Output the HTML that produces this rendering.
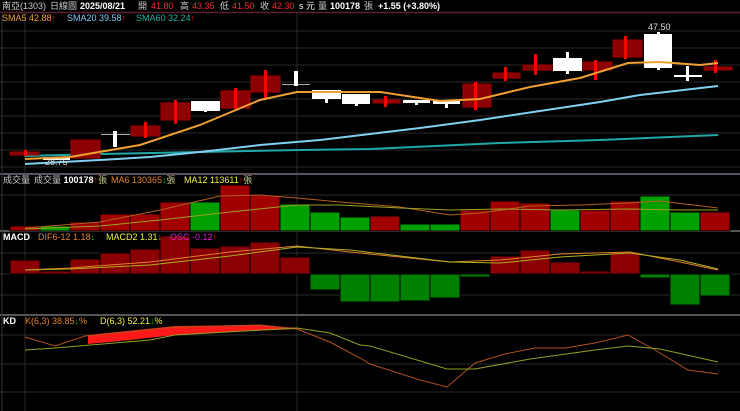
<!DOCTYPE html>
<html><head><meta charset="utf-8"><style>
html,body{margin:0;padding:0;background:#000;}
svg{display:block}
text{font-family:"Liberation Sans","Noto Sans CJK TC",sans-serif;font-size:9px}
</style></head><body>
<svg width="740" height="411" viewBox="0 0 740 411" xmlns="http://www.w3.org/2000/svg">
<rect width="740" height="411" fill="#000"/>
<g stroke="#2a2a2a" stroke-width="1">
<line x1="0" y1="31" x2="740" y2="31"/><line x1="0" y1="48" x2="740" y2="48"/><line x1="0" y1="65" x2="740" y2="65"/><line x1="0" y1="82" x2="740" y2="82"/><line x1="0" y1="99" x2="740" y2="99"/><line x1="0" y1="116" x2="740" y2="116"/><line x1="0" y1="133" x2="740" y2="133"/><line x1="0" y1="150" x2="740" y2="150"/><line x1="0" y1="167" x2="740" y2="167"/>
<line x1="0" y1="195" x2="740" y2="195"/>
<line x1="0" y1="253" x2="740" y2="253"/><line x1="0" y1="274" x2="740" y2="274"/><line x1="0" y1="295" x2="740" y2="295"/>
<line x1="0" y1="335" x2="740" y2="335"/><line x1="0" y1="364" x2="740" y2="364"/><line x1="0" y1="392" x2="740" y2="392"/>
<line x1="25" y1="13" x2="25" y2="411"/><line x1="297" y1="13" x2="297" y2="411"/>
</g>
<line x1="0" y1="12.5" x2="740" y2="12.5" stroke="#5a2030" stroke-width="1.5"/>
<line x1="0" y1="174" x2="740" y2="174" stroke="#5a5060" stroke-width="2"/>
<line x1="0" y1="231" x2="740" y2="231" stroke="#555" stroke-width="2"/>
<line x1="0" y1="315" x2="740" y2="315" stroke="#555" stroke-width="2"/>
<line x1="2" y1="13" x2="2" y2="411" stroke="#333"/>

<polyline fill="none" stroke="#20a8a8" stroke-width="2" points="25,156 100,154 200,152 300,150 370,149 500,143 600,140 718,135"/>
<polyline fill="none" stroke="#80d0f0" stroke-width="2" points="25,164 100,160 150,157 200,152 260,145 320,140 370,134 420,128 480,120 560,108 600,102 640,95 718,86"/>

<g fill="#8b0000" stroke="#a00000">
<rect x="10" y="152" width="29" height="3"/>
<rect x="71" y="140" width="29" height="18"/>
<rect x="131" y="126" width="29" height="10"/>
<rect x="161" y="103" width="29" height="17"/>
<rect x="221" y="91" width="29" height="17"/>
<rect x="251" y="76" width="29" height="16"/>
<rect x="373" y="100" width="27" height="3"/>
<rect x="463" y="84" width="28" height="23"/>
<rect x="493" y="73" width="27" height="5"/>
<rect x="523" y="65" width="29" height="5"/>
<rect x="583" y="62" width="29" height="8"/>
<rect x="613" y="40" width="29" height="17"/>
<rect x="704" y="67" width="28" height="3"/>
</g>
<g fill="#f00">
<rect x="24" y="150" width="3" height="6"/>
<rect x="144" y="122" width="3" height="16"/>
<rect x="174" y="100" width="3" height="24"/>
<rect x="234" y="88" width="3" height="21"/>
<rect x="264" y="70" width="3" height="30"/>
<rect x="384" y="96" width="3" height="11"/>
<rect x="474" y="82" width="3" height="28"/>
<rect x="504" y="67" width="3" height="14"/>
<rect x="534" y="54" width="3" height="21"/>
<rect x="594" y="60" width="3" height="20"/>
<rect x="624" y="36" width="3" height="23"/>
<rect x="714" y="60" width="3" height="13"/>
</g>
<g fill="#fff">
<rect x="43" y="157" width="27" height="3"/>
<rect x="101" y="134" width="29" height="1" fill="#aaa"/><rect x="113" y="131" width="4" height="16"/>
<rect x="191" y="101" width="29" height="10"/><rect x="204" y="101" width="3" height="11"/>
<rect x="282" y="84" width="28" height="1" fill="#aaa"/><rect x="294" y="71" width="4" height="15"/>
<rect x="312" y="90" width="29" height="9"/><rect x="325" y="90" width="3" height="13"/>
<rect x="342" y="94" width="28" height="10"/><rect x="355" y="94" width="3" height="12"/>
<rect x="403" y="100" width="27" height="3"/><rect x="415" y="100" width="3" height="5"/>
<rect x="433" y="101" width="27" height="3"/><rect x="445" y="101" width="3" height="7"/>
<rect x="553" y="58" width="29" height="13"/><rect x="566" y="52" width="3" height="22"/>
<rect x="644" y="34" width="28" height="34"/><rect x="657" y="32" width="3" height="38"/>
<rect x="674" y="75" width="28" height="2"/><rect x="686" y="66" width="3" height="15"/>
</g>
<polyline fill="none" stroke="#f0a030" stroke-width="2" points="25,159 70,157 140,145 200,125 260,100 297,92 340,92 380,92 440,101 480,99 530,87 580,78 628,63 660,62 700,65 718,63"/>
<text x="648" y="30" fill="#ddd" font-size="8">47.50</text>
<text x="45" y="165" fill="#ddd" font-size="8">28.75</text>

<!-- volume -->
<g stroke="#000" stroke-width="1">
<rect x="10" y="226" width="30" height="5" fill="#a00000"/>
<rect x="40" y="226" width="30" height="5" fill="#00a000"/>
<rect x="70" y="222" width="30" height="9" fill="#a00000"/>
<rect x="100" y="214" width="30" height="17" fill="#a00000"/>
<rect x="130" y="214" width="30" height="17" fill="#a00000"/>
<rect x="160" y="202" width="30" height="29" fill="#a00000"/>
<rect x="190" y="202" width="30" height="29" fill="#00a000"/>
<rect x="220" y="185" width="30" height="46" fill="#a00000"/>
<rect x="250" y="195" width="30" height="36" fill="#a00000"/>
<rect x="280" y="204" width="30" height="27" fill="#00a000"/>
<rect x="310" y="212" width="30" height="19" fill="#00a000"/>
<rect x="340" y="217" width="30" height="14" fill="#00a000"/>
<rect x="370" y="216" width="30" height="15" fill="#a00000"/>
<rect x="400" y="224" width="30" height="7" fill="#00a000"/>
<rect x="430" y="224" width="30" height="7" fill="#00a000"/>
<rect x="460" y="210" width="30" height="21" fill="#a00000"/>
<rect x="490" y="201" width="30" height="30" fill="#a00000"/>
<rect x="520" y="203" width="30" height="28" fill="#a00000"/>
<rect x="550" y="210" width="30" height="21" fill="#00a000"/>
<rect x="580" y="210" width="30" height="21" fill="#a00000"/>
<rect x="610" y="201" width="30" height="30" fill="#a00000"/>
<rect x="640" y="196" width="30" height="35" fill="#00a000"/>
<rect x="670" y="212" width="30" height="19" fill="#00a000"/>
<rect x="700" y="212" width="30" height="19" fill="#a00000"/>
</g>
<polyline fill="none" stroke="#b06020" stroke-width="1" points="25,228 100,222 160,210 220,196 260,195 297,198 340,202 400,207 450,215 480,213 530,206 580,205 628,203 660,201 718,208"/>
<polyline fill="none" stroke="#a0a020" stroke-width="1" points="25,229 100,226 160,220 230,212 297,205 340,205 400,208 450,210 500,209 560,210 628,209 680,210 718,210"/>

<!-- MACD -->
<g stroke="#000" stroke-width="1">
<rect x="10" y="260" width="30" height="14" fill="#8b0000"/>
<rect x="40" y="271" width="30" height="3" fill="#8b0000"/>
<rect x="70" y="259" width="30" height="15" fill="#8b0000"/>
<rect x="100" y="253" width="30" height="21" fill="#8b0000"/>
<rect x="130" y="249" width="30" height="25" fill="#8b0000"/>
<rect x="160" y="236" width="30" height="38" fill="#8b0000"/>
<rect x="190" y="248" width="30" height="26" fill="#8b0000"/>
<rect x="220" y="246" width="30" height="28" fill="#8b0000"/>
<rect x="250" y="242" width="30" height="32" fill="#8b0000"/>
<rect x="280" y="257" width="30" height="17" fill="#8b0000"/>
<rect x="310" y="274" width="30" height="16" fill="#008000"/>
<rect x="340" y="274" width="30" height="28" fill="#008000"/>
<rect x="370" y="274" width="30" height="28" fill="#008000"/>
<rect x="400" y="274" width="30" height="27" fill="#008000"/>
<rect x="430" y="274" width="30" height="24" fill="#008000"/>
<rect x="460" y="274" width="30" height="3" fill="#008000"/>
<rect x="490" y="256" width="30" height="18" fill="#8b0000"/>
<rect x="520" y="250" width="30" height="24" fill="#8b0000"/>
<rect x="550" y="262" width="30" height="12" fill="#8b0000"/>
<rect x="580" y="271" width="30" height="3" fill="#8b0000"/>
<rect x="610" y="252" width="30" height="22" fill="#8b0000"/>
<rect x="640" y="274" width="30" height="4" fill="#008000"/>
<rect x="670" y="274" width="30" height="31" fill="#008000"/>
<rect x="700" y="274" width="30" height="22" fill="#008000"/>
</g>
<polyline fill="none" stroke="#e08030" stroke-width="1" points="25,270 70,268 150,262 230,252 297,246 350,252 450,262 500,260 560,254 630,252 680,262 718,270"/>
<polyline fill="none" stroke="#b0b020" stroke-width="1" points="25,270 70,269 150,265 230,256 297,247 350,250 450,262 500,263 560,257 630,253 680,260 718,269"/>

<!-- KD -->
<polygon fill="#ff1a1a" points="88,335 175,326 262,325 297,328 310,334 297,329 250,331 175,335 120,341 88,344"/>
<polyline fill="none" stroke="#b05020" stroke-width="1" points="25,337 55,346 85,336 175,327 260,325 297,329 330,342 360,358 370,364 420,380 447,387 475,363 505,354 535,348 565,348 595,343 628,335 655,350 688,370 718,374"/>
<polyline fill="none" stroke="#90a020" stroke-width="1" points="25,350 55,348 150,340 175,335 297,328 330,333 360,345 370,346 447,369 475,369 530,359 595,350 628,346 660,349 718,362"/>

<!-- labels on top -->
<text x="2" y="9" fill="#ccc" font-size="8">南亞(1303)</text>
<text x="50" y="9" fill="#ccc">日線圖</text>
<text x="80" y="9" fill="#fff" font-weight="bold" font-size="10">2025/08/21</text>
<text x="138" y="9" fill="#ccc">開</text><text x="151" y="9" fill="#f03030" font-size="10">41.80</text>
<text x="180" y="9" fill="#ccc">高</text><text x="192" y="9" fill="#f03030" font-size="10">43.35</text>
<text x="220" y="9" fill="#ccc">低</text><text x="232" y="9" fill="#f03030" font-size="10">41.50</text>
<text x="260" y="9" fill="#ccc">收</text><text x="272" y="9" fill="#f03030" font-size="10">42.30</text>
<text x="299" y="9" fill="#fff" font-size="8">s 元</text>
<text x="318" y="9" fill="#ccc">量</text><text x="330" y="9" fill="#fff" font-weight="bold" font-size="10">100178</text>
<text x="364" y="9" fill="#ccc">張</text>
<text x="378" y="9" fill="#fff" font-weight="bold" font-size="10">+1.55 (+3.80%)</text>
<text x="2" y="21" fill="#f0a030">SMA5 42.88<tspan fill="#f00">↑</tspan></text>
<text x="67" y="21" fill="#80c8f0">SMA20 39.58<tspan fill="#f00">↑</tspan></text>
<text x="136" y="21" fill="#20b0a0">SMA60 32.24<tspan fill="#f00">↑</tspan></text>

<text x="3" y="183" fill="#ccc" font-size="8">成交量</text>
<text x="34" y="183" fill="#ccc" font-size="8">成交量 <tspan fill="#fff" font-weight="bold">100178</tspan><tspan fill="#f00">↑</tspan><tspan fill="#cc8">張</tspan></text>
<text x="111" y="183" fill="#e08030" font-size="8">MA6 130365<tspan fill="#0c0">↓</tspan><tspan fill="#cc8">張</tspan></text>
<text x="184" y="183" fill="#f0f040" font-size="8">MA12 113611<tspan fill="#f00">↑</tspan><tspan fill="#cc8">張</tspan></text>

<text x="3" y="240" fill="#fff" font-weight="bold" font-size="8">MACD</text>
<text x="38" y="240" fill="#e08030" font-size="8">DIF6-12 1.18<tspan fill="#0c0">↓</tspan></text>
<text x="106" y="240" fill="#f0f040" font-size="8">MACD2 1.31<tspan fill="#0c0">↓</tspan></text>
<text x="170" y="240" fill="#d020d0" font-size="8">OSC -0.12<tspan fill="#f00">↑</tspan></text>

<text x="3" y="324" fill="#fff" font-weight="bold" font-size="8">KD</text>
<text x="25" y="324" fill="#e08030" font-size="8">K(6,3) 38.85<tspan fill="#0c0">↓</tspan>%</text>
<text x="100" y="324" fill="#f0f040" font-size="8">D(6,3) 52.21<tspan fill="#0c0">↓</tspan>%</text>
</svg>
</body></html>
